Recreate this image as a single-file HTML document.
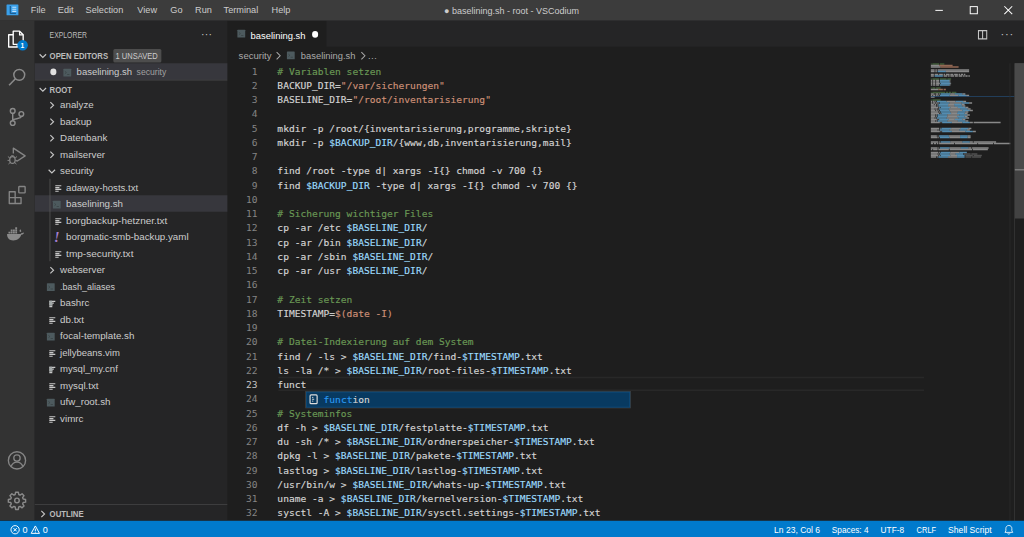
<!DOCTYPE html>
<html lang="de">
<head>
<meta charset="utf-8">
<title>baselining.sh - root - VSCodium</title>
<style>
html,body{margin:0;padding:0;width:1024px;height:537px;overflow:hidden;background:#1e1e1e}
#app{position:absolute;left:0;top:0;width:1368px;height:722px;transform-origin:0 0;transform:translate(-1.4px,-2px) scale(.75);font-family:"Liberation Sans",sans-serif;font-size:13px;color:#ccc;overflow:hidden}
#app div,#app span,#app svg,#app i{position:absolute;box-sizing:border-box;white-space:pre}
/* ---- title bar ---- */
#title{left:0;top:0;width:1368px;height:30px;background:#3c3c3c}
#title .m{top:1.3px;height:30px;line-height:30px;color:#ccc;font-size:13px;transform:scaleX(.94);transform-origin:0 0}
#wtitle{left:0;width:1368px;top:1.8px;height:30px;line-height:30px;text-align:center;font-size:12px;color:#ccc}
/* ---- activity bar ---- */
#act{left:0;top:30px;width:48px;height:666px;background:#333}
#act svg{left:9.500px;width:29px;height:29px;margin-top:-2px}
/* ---- side bar ---- */
#side{left:48px;top:30px;width:257px;height:666px;background:#252526}
#side .ttl{left:20px;top:1.7px;height:35px;line-height:35px;font-size:11px;color:#bbb;transform:scaleX(.83);transform-origin:0 0}
#side .hdr{left:0;width:257px;height:22px;line-height:22px;font-size:11px;font-weight:bold;color:#bbb}
#side .hdr .tx{left:20px;top:1px;transform:scaleX(.94);transform-origin:0 0}
#side .hdr svg.tw{left:3px;top:4px;width:16px;height:16px}
.row{left:0;width:257px;height:22px;line-height:22px;font-size:13px;color:#ccc}
.row.sel{background:#37373d}
.row svg.tw{position:relative!important;display:inline-block;vertical-align:top;width:16px;height:16px;top:4px;left:3px;margin-right:6px}
.row svg.fi{position:relative!important;display:inline-block;vertical-align:top;width:16px;height:16px;top:3px;margin-right:6px;overflow:visible}
.row .fy{position:relative!important;display:inline-block;width:16px;margin-right:6px;left:1.500px;top:.500px;text-align:center;color:#a57fd0;font-style:italic;font-weight:bold;font-family:"Liberation Serif",serif;font-size:19px;line-height:22px;vertical-align:top}
.row .lb{position:relative!important;top:1px}
/* ---- editor ---- */
#tabs{left:305px;top:30px;width:1063px;height:35px;background:#252526}
#tab{left:0;top:0;width:132px;height:35px;background:#1e1e1e;color:#fff;line-height:35px}
#bc{left:305px;top:65px;width:1063px;height:22px;line-height:22px;color:#a9a9a9;font-size:13px}
#ed{left:305px;top:0;width:1063px;height:696px}
.ln{left:0;width:40.300px;height:19px;line-height:21.400px;text-align:right;color:#858585;font-family:"DejaVu Sans Mono","Liberation Mono",monospace;font-size:12.79px}
.ln.cur{color:#c6c6c6}
.cl{left:66.700px;height:19px;line-height:21.400px;-webkit-text-stroke:.2px;color:#d4d4d4;font-family:"DejaVu Sans Mono","Liberation Mono",monospace;font-size:12.79px}
.cl span{position:static!important}
.c{color:#6a9955}.s{color:#ce9178}.v{color:#9cdcfe}.t{color:#d4d4d4}
#mm i{height:2px;opacity:.8}
/* ---- status ---- */
#status{left:0;top:697.300px;width:1368px;height:26px;background:#007acc;color:#fff;font-size:12px;line-height:22px}
#status span{top:.700px!important;transform-origin:0 0}
#status svg{margin-top:.300px;margin-left:1px}
</style>
</head>
<body>
<div id="app">

<!-- ================= EDITOR ================= -->
<div id="tabs">
  <div id="tab">
    <span style="left:8.500px;top:8px;width:16px;height:16px"><svg class="fi" viewBox="0 0 16 16"><rect x="4.400" y="4.400" width="10.400" height="10.400" rx="0.600" fill="#4d5a5e"/><path d="M6.400 7.800l2 1.600-2 1.600M9.400 12h3" stroke="#3a4447" stroke-width="1.100" fill="none"/></svg></span>
    <span style="left:31.300px;top:1.500px;transform:scaleX(.965);transform-origin:0 0">baselining.sh</span>
    <span style="left:112.500px;top:14.300px;width:8.500px;height:8.500px;border-radius:5px;background:#fff"></span>
  </div>
  <svg style="left:998.500px;top:10.500px;width:16px;height:16px" viewBox="0 0 16 16"><path d="M2.500 2.500h11v11h-11zM8 2.500v11" stroke="#c5c5c5" stroke-width="1.400" fill="none"/></svg>
  <span style="left:1031px;top:1.200px;line-height:33px;color:#c5c5c5;font-size:15px;letter-spacing:1px">···</span>
</div>
<div id="bc">
  <span style="left:14.500px;top:1.200px;transform:scaleX(.98);transform-origin:0 0">security</span>
  <svg style="left:59.600px;top:4px;width:16px;height:16px" viewBox="0 0 16 16"><path d="M5.7 3.3L10.4 8l-4.7 4.7" stroke="#a9a9a9" stroke-width="1.400" fill="none"/></svg>
  <span style="left:75px;top:2.300px;width:16px;height:16px"><svg class="fi" viewBox="0 0 16 16"><rect x="4.400" y="4.400" width="10.400" height="10.400" rx="0.600" fill="#4d5a5e"/><path d="M6.400 7.800l2 1.600-2 1.600M9.400 12h3" stroke="#3a4447" stroke-width="1.100" fill="none"/></svg></span>
  <span style="left:97.500px;top:1.200px;transform:scaleX(.96);transform-origin:0 0">baselining.sh</span>
  <svg style="left:173px;top:4px;width:16px;height:16px" viewBox="0 0 16 16"><path d="M5.7 3.3L10.4 8l-4.7 4.7" stroke="#a9a9a9" stroke-width="1.400" fill="none"/></svg>
  <span style="left:187px;top:1.200px">…</span>
</div>
<div id="ed">
  <!-- current line highlight -->
  <div style="left:67.5px;top:505px;width:861px;height:19px;border-top:2px solid #282828;border-bottom:2px solid #282828"></div>
<div class="ln" style="top:87px">1</div>
<div class="cl" style="top:87px"><span class="c"># Variablen setzen</span></div>
<div class="ln" style="top:106px">2</div>
<div class="cl" style="top:106px"><span class="t">BACKUP_DIR=</span><span class="s">"/var/sicherungen"</span></div>
<div class="ln" style="top:125px">3</div>
<div class="cl" style="top:125px"><span class="t">BASELINE_DIR=</span><span class="s">"/root/inventarisierung"</span></div>
<div class="ln" style="top:144px">4</div>
<div class="ln" style="top:163px">5</div>
<div class="cl" style="top:163px"><span class="t">mkdir -p /root/{inventarisierung,programme,skripte}</span></div>
<div class="ln" style="top:182px">6</div>
<div class="cl" style="top:182px"><span class="t">mkdir -p </span><span class="v">$BACKUP_DIR</span><span class="t">/{www,db,inventarisierung,mail}</span></div>
<div class="ln" style="top:201px">7</div>
<div class="ln" style="top:220px">8</div>
<div class="cl" style="top:220px"><span class="t">find /root -type d| xargs -I{} chmod -v 700 {}</span></div>
<div class="ln" style="top:239px">9</div>
<div class="cl" style="top:239px"><span class="t">find </span><span class="v">$BACKUP_DIR</span><span class="t"> -type d| xargs -I{} chmod -v 700 {}</span></div>
<div class="ln" style="top:258px">10</div>
<div class="ln" style="top:277px">11</div>
<div class="cl" style="top:277px"><span class="c"># Sicherung wichtiger Files</span></div>
<div class="ln" style="top:296px">12</div>
<div class="cl" style="top:296px"><span class="t">cp -ar /etc </span><span class="v">$BASELINE_DIR</span><span class="t">/</span></div>
<div class="ln" style="top:315px">13</div>
<div class="cl" style="top:315px"><span class="t">cp -ar /bin </span><span class="v">$BASELINE_DIR</span><span class="t">/</span></div>
<div class="ln" style="top:334px">14</div>
<div class="cl" style="top:334px"><span class="t">cp -ar /sbin </span><span class="v">$BASELINE_DIR</span><span class="t">/</span></div>
<div class="ln" style="top:353px">15</div>
<div class="cl" style="top:353px"><span class="t">cp -ar /usr </span><span class="v">$BASELINE_DIR</span><span class="t">/</span></div>
<div class="ln" style="top:372px">16</div>
<div class="ln" style="top:391px">17</div>
<div class="cl" style="top:391px"><span class="c"># Zeit setzen</span></div>
<div class="ln" style="top:410px">18</div>
<div class="cl" style="top:410px"><span class="t">TIMESTAMP=</span><span class="s">$(date -I)</span></div>
<div class="ln" style="top:429px">19</div>
<div class="ln" style="top:448px">20</div>
<div class="cl" style="top:448px"><span class="c"># Datei-Indexierung auf dem System</span></div>
<div class="ln" style="top:467px">21</div>
<div class="cl" style="top:467px"><span class="t">find / -ls &gt; </span><span class="v">$BASELINE_DIR</span><span class="t">/find-</span><span class="v">$TIMESTAMP</span><span class="t">.txt</span></div>
<div class="ln" style="top:486px">22</div>
<div class="cl" style="top:486px"><span class="t">ls -la /* &gt; </span><span class="v">$BASELINE_DIR</span><span class="t">/root-files-</span><span class="v">$TIMESTAMP</span><span class="t">.txt</span></div>
<div class="ln cur" style="top:505px">23</div>
<div class="cl" style="top:505px"><span class="t">funct</span></div>
<div class="ln" style="top:524px">24</div>
<div class="ln" style="top:543px">25</div>
<div class="cl" style="top:543px"><span class="c"># Systeminfos</span></div>
<div class="ln" style="top:562px">26</div>
<div class="cl" style="top:562px"><span class="t">df -h &gt; </span><span class="v">$BASELINE_DIR</span><span class="t">/festplatte-</span><span class="v">$TIMESTAMP</span><span class="t">.txt</span></div>
<div class="ln" style="top:581px">27</div>
<div class="cl" style="top:581px"><span class="t">du -sh /* &gt; </span><span class="v">$BASELINE_DIR</span><span class="t">/ordnerspeicher-</span><span class="v">$TIMESTAMP</span><span class="t">.txt</span></div>
<div class="ln" style="top:600px">28</div>
<div class="cl" style="top:600px"><span class="t">dpkg -l &gt; </span><span class="v">$BASELINE_DIR</span><span class="t">/pakete-</span><span class="v">$TIMESTAMP</span><span class="t">.txt</span></div>
<div class="ln" style="top:619px">29</div>
<div class="cl" style="top:619px"><span class="t">lastlog &gt; </span><span class="v">$BASELINE_DIR</span><span class="t">/lastlog-</span><span class="v">$TIMESTAMP</span><span class="t">.txt</span></div>
<div class="ln" style="top:638px">30</div>
<div class="cl" style="top:638px"><span class="t">/usr/bin/w &gt; </span><span class="v">$BASELINE_DIR</span><span class="t">/whats-up-</span><span class="v">$TIMESTAMP</span><span class="t">.txt</span></div>
<div class="ln" style="top:657px">31</div>
<div class="cl" style="top:657px"><span class="t">uname -a &gt; </span><span class="v">$BASELINE_DIR</span><span class="t">/kernelversion-</span><span class="v">$TIMESTAMP</span><span class="t">.txt</span></div>
<div class="ln" style="top:676px">32</div>
<div class="cl" style="top:676px"><span class="t">sysctl -A &gt; </span><span class="v">$BASELINE_DIR</span><span class="t">/sysctl.settings-</span><span class="v">$TIMESTAMP</span><span class="t">.txt</span></div>
  <!-- suggest widget -->
  <div id="sug" style="left:104.300px;top:524.300px;width:433.700px;height:22.500px;background:#252526;border:1px solid #454545">
    <div style="left:0;top:0;width:431.700px;height:20.500px;background:#083a61;border:1px solid #0f4d7e"></div>
    <svg style="left:2px;top:2px;width:16px;height:16px" viewBox="0 0 16 16"><rect x="3.300" y="2.200" width="9.400" height="11.600" rx="1.300" stroke="#dcdcdc" stroke-width="1.600" fill="none"/><path d="M6 5.500h1.600M6 8h2.800M6 10.500h1.600" stroke="#dcdcdc" stroke-width="1.300"/></svg>
    <span style="left:23px;top:0;height:19px;line-height:21px;-webkit-text-stroke:.2px;font-family:'DejaVu Sans Mono','Liberation Mono',monospace;font-size:12.79px;color:#d4d4d4"><span style="position:static!important;color:#2a98f0">funct</span>ion</span>
  </div>
  <!-- minimap -->
  <div id="mm" style="left:-305px;top:0;width:1368px;height:696px"><i style="left:1243px;top:87px;width:1px;background:#476a3d"></i><i style="left:1245px;top:87px;width:9px;background:#476a3d"></i><i style="left:1255px;top:87px;width:6px;background:#476a3d"></i><i style="left:1243px;top:89px;width:11px;background:#a4a4a4"></i><i style="left:1254px;top:89px;width:18px;background:#b07a62"></i><i style="left:1243px;top:91px;width:13px;background:#a4a4a4"></i><i style="left:1256px;top:91px;width:24px;background:#b07a62"></i><i style="left:1243px;top:95px;width:5px;background:#a4a4a4"></i><i style="left:1249px;top:95px;width:2px;background:#a4a4a4"></i><i style="left:1252px;top:95px;width:42px;background:#a4a4a4"></i><i style="left:1243px;top:97px;width:5px;background:#a4a4a4"></i><i style="left:1249px;top:97px;width:2px;background:#a4a4a4"></i><i style="left:1252px;top:97px;width:11px;background:#62a8d4"></i><i style="left:1263px;top:97px;width:31px;background:#a4a4a4"></i><i style="left:1243px;top:101px;width:4px;background:#a4a4a4"></i><i style="left:1248px;top:101px;width:5px;background:#a4a4a4"></i><i style="left:1254px;top:101px;width:5px;background:#a4a4a4"></i><i style="left:1260px;top:101px;width:2px;background:#a4a4a4"></i><i style="left:1263px;top:101px;width:5px;background:#a4a4a4"></i><i style="left:1269px;top:101px;width:4px;background:#a4a4a4"></i><i style="left:1274px;top:101px;width:5px;background:#a4a4a4"></i><i style="left:1280px;top:101px;width:2px;background:#a4a4a4"></i><i style="left:1283px;top:101px;width:3px;background:#a4a4a4"></i><i style="left:1287px;top:101px;width:2px;background:#a4a4a4"></i><i style="left:1243px;top:103px;width:4px;background:#a4a4a4"></i><i style="left:1248px;top:103px;width:11px;background:#62a8d4"></i><i style="left:1260px;top:103px;width:5px;background:#a4a4a4"></i><i style="left:1266px;top:103px;width:2px;background:#a4a4a4"></i><i style="left:1269px;top:103px;width:5px;background:#a4a4a4"></i><i style="left:1275px;top:103px;width:4px;background:#a4a4a4"></i><i style="left:1280px;top:103px;width:5px;background:#a4a4a4"></i><i style="left:1286px;top:103px;width:2px;background:#a4a4a4"></i><i style="left:1289px;top:103px;width:3px;background:#a4a4a4"></i><i style="left:1293px;top:103px;width:2px;background:#a4a4a4"></i><i style="left:1243px;top:107px;width:1px;background:#476a3d"></i><i style="left:1245px;top:107px;width:9px;background:#476a3d"></i><i style="left:1255px;top:107px;width:9px;background:#476a3d"></i><i style="left:1265px;top:107px;width:5px;background:#476a3d"></i><i style="left:1243px;top:109px;width:2px;background:#a4a4a4"></i><i style="left:1246px;top:109px;width:3px;background:#a4a4a4"></i><i style="left:1250px;top:109px;width:4px;background:#a4a4a4"></i><i style="left:1255px;top:109px;width:13px;background:#62a8d4"></i><i style="left:1268px;top:109px;width:1px;background:#a4a4a4"></i><i style="left:1243px;top:111px;width:2px;background:#a4a4a4"></i><i style="left:1246px;top:111px;width:3px;background:#a4a4a4"></i><i style="left:1250px;top:111px;width:4px;background:#a4a4a4"></i><i style="left:1255px;top:111px;width:13px;background:#62a8d4"></i><i style="left:1268px;top:111px;width:1px;background:#a4a4a4"></i><i style="left:1243px;top:113px;width:2px;background:#a4a4a4"></i><i style="left:1246px;top:113px;width:3px;background:#a4a4a4"></i><i style="left:1250px;top:113px;width:5px;background:#a4a4a4"></i><i style="left:1256px;top:113px;width:13px;background:#62a8d4"></i><i style="left:1269px;top:113px;width:1px;background:#a4a4a4"></i><i style="left:1243px;top:115px;width:2px;background:#a4a4a4"></i><i style="left:1246px;top:115px;width:3px;background:#a4a4a4"></i><i style="left:1250px;top:115px;width:4px;background:#a4a4a4"></i><i style="left:1255px;top:115px;width:13px;background:#62a8d4"></i><i style="left:1268px;top:115px;width:1px;background:#a4a4a4"></i><i style="left:1243px;top:119px;width:1px;background:#476a3d"></i><i style="left:1245px;top:119px;width:4px;background:#476a3d"></i><i style="left:1250px;top:119px;width:6px;background:#476a3d"></i><i style="left:1243px;top:121px;width:10px;background:#a4a4a4"></i><i style="left:1253px;top:121px;width:6px;background:#b07a62"></i><i style="left:1260px;top:121px;width:3px;background:#b07a62"></i><i style="left:1243px;top:125px;width:1px;background:#476a3d"></i><i style="left:1245px;top:125px;width:17px;background:#476a3d"></i><i style="left:1263px;top:125px;width:3px;background:#476a3d"></i><i style="left:1267px;top:125px;width:3px;background:#476a3d"></i><i style="left:1271px;top:125px;width:6px;background:#476a3d"></i><i style="left:1243px;top:127px;width:4px;background:#a4a4a4"></i><i style="left:1248px;top:127px;width:1px;background:#a4a4a4"></i><i style="left:1250px;top:127px;width:3px;background:#a4a4a4"></i><i style="left:1254px;top:127px;width:1px;background:#a4a4a4"></i><i style="left:1256px;top:127px;width:13px;background:#62a8d4"></i><i style="left:1269px;top:127px;width:6px;background:#a4a4a4"></i><i style="left:1275px;top:127px;width:10px;background:#62a8d4"></i><i style="left:1285px;top:127px;width:4px;background:#a4a4a4"></i><i style="left:1243px;top:129px;width:2px;background:#a4a4a4"></i><i style="left:1246px;top:129px;width:3px;background:#a4a4a4"></i><i style="left:1250px;top:129px;width:2px;background:#a4a4a4"></i><i style="left:1253px;top:129px;width:1px;background:#a4a4a4"></i><i style="left:1255px;top:129px;width:13px;background:#62a8d4"></i><i style="left:1268px;top:129px;width:12px;background:#a4a4a4"></i><i style="left:1280px;top:129px;width:10px;background:#62a8d4"></i><i style="left:1290px;top:129px;width:4px;background:#a4a4a4"></i><i style="left:1243px;top:131px;width:5px;background:#a4a4a4"></i><i style="left:1243px;top:135px;width:1px;background:#476a3d"></i><i style="left:1245px;top:135px;width:11px;background:#476a3d"></i><i style="left:1243px;top:137px;width:2px;background:#a4a4a4"></i><i style="left:1246px;top:137px;width:2px;background:#a4a4a4"></i><i style="left:1249px;top:137px;width:1px;background:#a4a4a4"></i><i style="left:1251px;top:137px;width:13px;background:#62a8d4"></i><i style="left:1264px;top:137px;width:12px;background:#a4a4a4"></i><i style="left:1276px;top:137px;width:10px;background:#62a8d4"></i><i style="left:1286px;top:137px;width:4px;background:#a4a4a4"></i><i style="left:1243px;top:139px;width:2px;background:#a4a4a4"></i><i style="left:1246px;top:139px;width:3px;background:#a4a4a4"></i><i style="left:1250px;top:139px;width:2px;background:#a4a4a4"></i><i style="left:1253px;top:139px;width:1px;background:#a4a4a4"></i><i style="left:1255px;top:139px;width:13px;background:#62a8d4"></i><i style="left:1268px;top:139px;width:16px;background:#a4a4a4"></i><i style="left:1284px;top:139px;width:10px;background:#62a8d4"></i><i style="left:1294px;top:139px;width:4px;background:#a4a4a4"></i><i style="left:1243px;top:141px;width:4px;background:#a4a4a4"></i><i style="left:1248px;top:141px;width:2px;background:#a4a4a4"></i><i style="left:1251px;top:141px;width:1px;background:#a4a4a4"></i><i style="left:1253px;top:141px;width:13px;background:#62a8d4"></i><i style="left:1266px;top:141px;width:8px;background:#a4a4a4"></i><i style="left:1274px;top:141px;width:10px;background:#62a8d4"></i><i style="left:1284px;top:141px;width:4px;background:#a4a4a4"></i><i style="left:1243px;top:143px;width:7px;background:#a4a4a4"></i><i style="left:1251px;top:143px;width:1px;background:#a4a4a4"></i><i style="left:1253px;top:143px;width:13px;background:#62a8d4"></i><i style="left:1266px;top:143px;width:9px;background:#a4a4a4"></i><i style="left:1275px;top:143px;width:10px;background:#62a8d4"></i><i style="left:1285px;top:143px;width:4px;background:#a4a4a4"></i><i style="left:1243px;top:145px;width:10px;background:#a4a4a4"></i><i style="left:1254px;top:145px;width:1px;background:#a4a4a4"></i><i style="left:1256px;top:145px;width:13px;background:#62a8d4"></i><i style="left:1269px;top:145px;width:10px;background:#a4a4a4"></i><i style="left:1279px;top:145px;width:10px;background:#62a8d4"></i><i style="left:1289px;top:145px;width:4px;background:#a4a4a4"></i><i style="left:1243px;top:147px;width:5px;background:#a4a4a4"></i><i style="left:1249px;top:147px;width:2px;background:#a4a4a4"></i><i style="left:1252px;top:147px;width:1px;background:#a4a4a4"></i><i style="left:1254px;top:147px;width:13px;background:#62a8d4"></i><i style="left:1267px;top:147px;width:15px;background:#a4a4a4"></i><i style="left:1282px;top:147px;width:10px;background:#62a8d4"></i><i style="left:1292px;top:147px;width:4px;background:#a4a4a4"></i><i style="left:1243px;top:149px;width:6px;background:#a4a4a4"></i><i style="left:1250px;top:149px;width:2px;background:#a4a4a4"></i><i style="left:1253px;top:149px;width:1px;background:#a4a4a4"></i><i style="left:1255px;top:149px;width:13px;background:#62a8d4"></i><i style="left:1268px;top:149px;width:17px;background:#a4a4a4"></i><i style="left:1285px;top:149px;width:10px;background:#62a8d4"></i><i style="left:1295px;top:149px;width:4px;background:#a4a4a4"></i><i style="left:1243px;top:151px;width:10px;background:#a4a4a4"></i><i style="left:1254px;top:151px;width:1px;background:#a4a4a4"></i><i style="left:1256px;top:151px;width:13px;background:#62a8d4"></i><i style="left:1269px;top:151px;width:10px;background:#a4a4a4"></i><i style="left:1279px;top:151px;width:10px;background:#62a8d4"></i><i style="left:1289px;top:151px;width:4px;background:#a4a4a4"></i><i style="left:1243px;top:153px;width:11px;background:#a4a4a4"></i><i style="left:1255px;top:153px;width:1px;background:#a4a4a4"></i><i style="left:1257px;top:153px;width:13px;background:#62a8d4"></i><i style="left:1270px;top:153px;width:8px;background:#a4a4a4"></i><i style="left:1278px;top:153px;width:10px;background:#62a8d4"></i><i style="left:1288px;top:153px;width:4px;background:#a4a4a4"></i><i style="left:1243px;top:155px;width:6px;background:#a4a4a4"></i><i style="left:1250px;top:155px;width:1px;background:#a4a4a4"></i><i style="left:1252px;top:155px;width:13px;background:#62a8d4"></i><i style="left:1265px;top:155px;width:16px;background:#a4a4a4"></i><i style="left:1281px;top:155px;width:10px;background:#62a8d4"></i><i style="left:1291px;top:155px;width:4px;background:#a4a4a4"></i><i style="left:1243px;top:157px;width:6px;background:#a4a4a4"></i><i style="left:1250px;top:157px;width:1px;background:#a4a4a4"></i><i style="left:1252px;top:157px;width:13px;background:#62a8d4"></i><i style="left:1265px;top:157px;width:13px;background:#a4a4a4"></i><i style="left:1278px;top:157px;width:10px;background:#62a8d4"></i><i style="left:1288px;top:157px;width:4px;background:#a4a4a4"></i><i style="left:1243px;top:159px;width:5px;background:#a4a4a4"></i><i style="left:1249px;top:159px;width:1px;background:#a4a4a4"></i><i style="left:1251px;top:159px;width:13px;background:#62a8d4"></i><i style="left:1264px;top:159px;width:16px;background:#a4a4a4"></i><i style="left:1280px;top:159px;width:10px;background:#62a8d4"></i><i style="left:1290px;top:159px;width:4px;background:#a4a4a4"></i><i style="left:1243px;top:161px;width:8px;background:#a4a4a4"></i><i style="left:1252px;top:161px;width:1px;background:#a4a4a4"></i><i style="left:1254px;top:161px;width:13px;background:#62a8d4"></i><i style="left:1267px;top:161px;width:8px;background:#a4a4a4"></i><i style="left:1275px;top:161px;width:10px;background:#62a8d4"></i><i style="left:1285px;top:161px;width:4px;background:#a4a4a4"></i><i style="left:1243px;top:163px;width:6px;background:#a4a4a4"></i><i style="left:1250px;top:163px;width:1px;background:#a4a4a4"></i><i style="left:1252px;top:163px;width:13px;background:#62a8d4"></i><i style="left:1265px;top:163px;width:14px;background:#a4a4a4"></i><i style="left:1279px;top:163px;width:10px;background:#62a8d4"></i><i style="left:1289px;top:163px;width:4px;background:#a4a4a4"></i><i style="left:1243px;top:165px;width:12px;background:#a4a4a4"></i><i style="left:1256px;top:165px;width:1px;background:#a4a4a4"></i><i style="left:1258px;top:165px;width:13px;background:#62a8d4"></i><i style="left:1271px;top:165px;width:14px;background:#a4a4a4"></i><i style="left:1285px;top:165px;width:10px;background:#62a8d4"></i><i style="left:1295px;top:165px;width:4px;background:#a4a4a4"></i><i style="left:1300px;top:165px;width:36px;background:#a4a4a4"></i><i style="left:1243px;top:173px;width:11px;background:#a4a4a4"></i><i style="left:1255px;top:173px;width:1px;background:#a4a4a4"></i><i style="left:1257px;top:173px;width:13px;background:#62a8d4"></i><i style="left:1270px;top:173px;width:13px;background:#a4a4a4"></i><i style="left:1283px;top:173px;width:10px;background:#62a8d4"></i><i style="left:1293px;top:173px;width:4px;background:#a4a4a4"></i><i style="left:1243px;top:175px;width:9px;background:#a4a4a4"></i><i style="left:1253px;top:175px;width:1px;background:#a4a4a4"></i><i style="left:1255px;top:175px;width:13px;background:#62a8d4"></i><i style="left:1268px;top:175px;width:13px;background:#a4a4a4"></i><i style="left:1281px;top:175px;width:10px;background:#62a8d4"></i><i style="left:1291px;top:175px;width:4px;background:#a4a4a4"></i><i style="left:1243px;top:177px;width:12px;background:#a4a4a4"></i><i style="left:1256px;top:177px;width:1px;background:#a4a4a4"></i><i style="left:1258px;top:177px;width:13px;background:#62a8d4"></i><i style="left:1271px;top:177px;width:18px;background:#a4a4a4"></i><i style="left:1289px;top:177px;width:10px;background:#62a8d4"></i><i style="left:1299px;top:177px;width:4px;background:#a4a4a4"></i><i style="left:1243px;top:183px;width:8px;background:#a4a4a4"></i><i style="left:1252px;top:183px;width:1px;background:#a4a4a4"></i><i style="left:1254px;top:183px;width:13px;background:#62a8d4"></i><i style="left:1267px;top:183px;width:15px;background:#a4a4a4"></i><i style="left:1282px;top:183px;width:10px;background:#62a8d4"></i><i style="left:1292px;top:183px;width:4px;background:#a4a4a4"></i><i style="left:1243px;top:185px;width:9px;background:#a4a4a4"></i><i style="left:1253px;top:185px;width:1px;background:#a4a4a4"></i><i style="left:1255px;top:185px;width:13px;background:#62a8d4"></i><i style="left:1268px;top:185px;width:14px;background:#a4a4a4"></i><i style="left:1282px;top:185px;width:10px;background:#62a8d4"></i><i style="left:1292px;top:185px;width:4px;background:#a4a4a4"></i><i style="left:1243px;top:191px;width:10px;background:#a4a4a4"></i><i style="left:1254px;top:191px;width:1px;background:#a4a4a4"></i><i style="left:1256px;top:191px;width:13px;background:#62a8d4"></i><i style="left:1269px;top:191px;width:16px;background:#a4a4a4"></i><i style="left:1285px;top:191px;width:10px;background:#62a8d4"></i><i style="left:1295px;top:191px;width:4px;background:#a4a4a4"></i><i style="left:1300px;top:191px;width:30px;background:#a4a4a4"></i><i style="left:1243px;top:193px;width:3px;background:#a4a4a4"></i><i style="left:1247px;top:193px;width:3px;background:#a4a4a4"></i><i style="left:1251px;top:193px;width:2px;background:#a4a4a4"></i><i style="left:1254px;top:193px;width:20px;background:#a4a4a4"></i><i style="left:1275px;top:193px;width:30px;background:#a4a4a4"></i><i style="left:1306px;top:193px;width:20px;background:#a4a4a4"></i><i style="left:1327px;top:193px;width:22px;background:#a4a4a4"></i><i style="left:1243px;top:199px;width:9px;background:#a4a4a4"></i><i style="left:1253px;top:199px;width:1px;background:#a4a4a4"></i><i style="left:1255px;top:199px;width:13px;background:#62a8d4"></i><i style="left:1268px;top:199px;width:15px;background:#a4a4a4"></i><i style="left:1283px;top:199px;width:10px;background:#62a8d4"></i><i style="left:1293px;top:199px;width:4px;background:#a4a4a4"></i><i style="left:1298px;top:199px;width:22px;background:#a4a4a4"></i><i style="left:1243px;top:201px;width:2px;background:#a4a4a4"></i><i style="left:1246px;top:201px;width:6px;background:#a4a4a4"></i><i style="left:1253px;top:201px;width:14px;background:#a4a4a4"></i><i style="left:1268px;top:201px;width:30px;background:#a4a4a4"></i><i style="left:1299px;top:201px;width:20px;background:#a4a4a4"></i><i style="left:1243px;top:205px;width:10px;background:#a4a4a4"></i><i style="left:1254px;top:205px;width:1px;background:#a4a4a4"></i><i style="left:1256px;top:205px;width:13px;background:#62a8d4"></i><i style="left:1269px;top:205px;width:12px;background:#a4a4a4"></i><i style="left:1281px;top:205px;width:10px;background:#62a8d4"></i><i style="left:1243px;top:207px;width:9px;background:#a4a4a4"></i><i style="left:1253px;top:207px;width:1px;background:#a4a4a4"></i><i style="left:1255px;top:207px;width:13px;background:#62a8d4"></i><i style="left:1268px;top:207px;width:8px;background:#a4a4a4"></i><i style="left:1276px;top:207px;width:10px;background:#62a8d4"></i><i style="left:1287px;top:207px;width:9px;background:#5c5c5c"></i><i style="left:1297px;top:207px;width:8px;background:#5c5c5c"></i><i style="left:1243px;top:209px;width:10px;background:#a4a4a4"></i><i style="left:1254px;top:209px;width:1px;background:#a4a4a4"></i><i style="left:1256px;top:209px;width:13px;background:#62a8d4"></i><i style="left:1269px;top:209px;width:9px;background:#a4a4a4"></i><i style="left:1278px;top:209px;width:10px;background:#62a8d4"></i><i style="left:1289px;top:209px;width:10px;background:#5c5c5c"></i><i style="left:1300px;top:209px;width:11px;background:#5c5c5c"></i><i style="left:1243px;top:211px;width:7px;background:#a4a4a4"></i><i style="left:1251px;top:211px;width:1px;background:#a4a4a4"></i><i style="left:1253px;top:211px;width:13px;background:#62a8d4"></i><i style="left:1266px;top:211px;width:12px;background:#a4a4a4"></i><i style="left:1278px;top:211px;width:10px;background:#62a8d4"></i><i style="left:1289px;top:211px;width:8px;background:#5c5c5c"></i><i style="left:1298px;top:211px;width:12px;background:#5c5c5c"></i>
    <div style="left:1243px;top:131px;width:112px;height:1.4px;background:#264f78;opacity:.9"></div>
  </div>
  <!-- overview ruler + scrollbar -->
  <div style="left:1042.5px;top:87px;width:1px;height:611px;background:#2b2b2b"></div>
  <div style="left:1049px;top:87px;width:1px;height:611px;background:#383838"></div>
  <div style="left:1049.5px;top:87px;width:14px;height:207px;background:#424242"></div>
  <div style="left:1049.5px;top:87px;width:14px;height:142px;background:#4a4a4a"></div>
  <div style="left:1049.5px;top:228px;width:14px;height:2px;background:#7a7a7a"></div>
</div>

<!-- ================= SIDE BAR ================= -->
<div id="side">
  <span class="ttl">EXPLORER</span>
  <span style="left:222px;top:1.500px;line-height:33px;color:#c5c5c5;font-size:14px;letter-spacing:.3px">···</span>
  <div class="hdr" style="top:35px"><svg class="tw" viewBox="0 0 16 16"><path d="M3.700 6L8 10.300l4.300-4.300" stroke="#c5c5c5" stroke-width="1.500" fill="none"/></svg><span class="tx">OPEN EDITORS</span>
    <span style="left:104.500px;top:3px;width:64px;height:18px;background:#4d4d4d;border-radius:2px"></span><span style="left:108px;top:1px;color:#ccc;font-weight:normal;font-size:11px;transform:scaleX(.91);transform-origin:0 0">1 UNSAVED</span>
  </div>
  <div class="row sel" style="top:57px">
    <span style="left:20.800px;top:7px;width:8.500px;height:8.500px;border-radius:5px;background:#e0e0e0"></span>
    <span style="left:33.500px;top:-.500px;width:16px;height:16px"><svg class="fi" viewBox="0 0 16 16"><rect x="4.400" y="4.400" width="10.400" height="10.400" rx="0.600" fill="#4d5a5e"/><path d="M6.400 7.800l2 1.600-2 1.600M9.400 12h3" stroke="#3a4447" stroke-width="1.100" fill="none"/></svg></span>
    <span style="left:56px;top:1px;transform:scaleX(.975);transform-origin:0 0">baselining.sh</span>
    <span style="left:136px;top:1px;font-size:11.5px;color:#a0a0a0">security</span>
  </div>
  <div class="hdr" style="top:79px;border-top:1px solid rgba(204,204,204,.2)"><svg class="tw" viewBox="0 0 16 16"><path d="M3.700 6L8 10.300l4.300-4.300" stroke="#c5c5c5" stroke-width="1.500" fill="none"/></svg><span class="tx">ROOT</span></div>
  <div id="tree" style="left:0;top:-30px;width:257px;height:600px">
<div class="row" style="top:131px;padding-left:12px"><svg class="tw" viewBox="0 0 16 16"><path d="M6 3.700L10.300 8l-4.300 4.300" stroke="#c5c5c5" stroke-width="1.500" fill="none"/></svg><span class="lb">analyze</span></div>
<div class="row" style="top:153px;padding-left:12px"><svg class="tw" viewBox="0 0 16 16"><path d="M6 3.700L10.300 8l-4.300 4.300" stroke="#c5c5c5" stroke-width="1.500" fill="none"/></svg><span class="lb">backup</span></div>
<div class="row" style="top:175px;padding-left:12px"><svg class="tw" viewBox="0 0 16 16"><path d="M6 3.700L10.300 8l-4.300 4.300" stroke="#c5c5c5" stroke-width="1.500" fill="none"/></svg><span class="lb">Datenbank</span></div>
<div class="row" style="top:197px;padding-left:12px"><svg class="tw" viewBox="0 0 16 16"><path d="M6 3.700L10.300 8l-4.300 4.300" stroke="#c5c5c5" stroke-width="1.500" fill="none"/></svg><span class="lb">mailserver</span></div>
<div class="row" style="top:219px;padding-left:12px"><svg class="tw" viewBox="0 0 16 16"><path d="M3.700 6L8 10.300l4.300-4.300" stroke="#c5c5c5" stroke-width="1.500" fill="none"/></svg><span class="lb">security</span></div>
<div class="row" style="top:241px;padding-left:20px"><svg class="fi" viewBox="0 0 16 16"><path d="M7.600 6.400h8M7.600 8.800h5.500M7.600 11.200h8M7.600 13.600h4.500" stroke="#c8c8c8" stroke-width="1.500" fill="none"/></svg><span class="lb" style="display:inline-block;transform:scaleX(.985);transform-origin:0 0">adaway-hosts.txt</span></div>
<div class="row sel" style="top:263px;padding-left:20px"><svg class="fi" viewBox="0 0 16 16"><rect x="4.400" y="4.400" width="10.400" height="10.400" rx="0.600" fill="#4d5a5e"/><path d="M6.400 7.800l2 1.600-2 1.600M9.400 12h3" stroke="#3a4447" stroke-width="1.100" fill="none"/></svg><span class="lb">baselining.sh</span></div>
<div class="row" style="top:285px;padding-left:20px"><svg class="fi" viewBox="0 0 16 16"><path d="M7.600 6.400h8M7.600 8.800h5.500M7.600 11.200h8M7.600 13.600h4.500" stroke="#c8c8c8" stroke-width="1.500" fill="none"/></svg><span class="lb" style="display:inline-block;transform:scaleX(1.02);transform-origin:0 0">borgbackup-hetzner.txt</span></div>
<div class="row" style="top:307px;padding-left:20px"><span class="fy">!</span><span class="lb">borgmatic-smb-backup.yaml</span></div>
<div class="row" style="top:329px;padding-left:20px"><svg class="fi" viewBox="0 0 16 16"><path d="M7.600 6.400h8M7.600 8.800h5.500M7.600 11.200h8M7.600 13.600h4.500" stroke="#c8c8c8" stroke-width="1.500" fill="none"/></svg><span class="lb" style="display:inline-block;transform:scaleX(1.03);transform-origin:0 0">tmp-security.txt</span></div>
<div class="row" style="top:351px;padding-left:12px"><svg class="tw" viewBox="0 0 16 16"><path d="M6 3.700L10.300 8l-4.300 4.300" stroke="#c5c5c5" stroke-width="1.500" fill="none"/></svg><span class="lb">webserver</span></div>
<div class="row" style="top:373px;padding-left:12px"><svg class="fi" viewBox="0 0 16 16"><rect x="4.400" y="4.400" width="10.400" height="10.400" rx="0.600" fill="#4d5a5e"/><path d="M6.400 7.800l2 1.600-2 1.600M9.400 12h3" stroke="#3a4447" stroke-width="1.100" fill="none"/></svg><span class="lb" style="display:inline-block;transform:scaleX(.92);transform-origin:0 0">.bash_aliases</span></div>
<div class="row" style="top:395px;padding-left:12px"><svg class="fi" viewBox="0 0 16 16"><path d="M7.600 6.400h8M7.600 8.800h6M7.600 11.200h4.500M7.600 13.600h4" stroke="#c8c8c8" stroke-width="1.600" fill="none"/><rect x="7.600" y="5.600" width="3.600" height="6.400" fill="#a4aaaa"/></svg><span class="lb">bashrc</span></div>
<div class="row" style="top:417px;padding-left:12px"><svg class="fi" viewBox="0 0 16 16"><path d="M7.600 6.400h8M7.600 8.800h5.500M7.600 11.200h8M7.600 13.600h4.500" stroke="#c8c8c8" stroke-width="1.500" fill="none"/></svg><span class="lb">db.txt</span></div>
<div class="row" style="top:439px;padding-left:12px"><svg class="fi" viewBox="0 0 16 16"><rect x="4.400" y="4.400" width="10.400" height="10.400" rx="0.600" fill="#4d5a5e"/><path d="M6.400 7.800l2 1.600-2 1.600M9.400 12h3" stroke="#3a4447" stroke-width="1.100" fill="none"/></svg><span class="lb">focal-template.sh</span></div>
<div class="row" style="top:461px;padding-left:12px"><svg class="fi" viewBox="0 0 16 16"><path d="M7.600 6.400h8M7.600 8.800h5.500M7.600 11.200h8M7.600 13.600h4.500" stroke="#c8c8c8" stroke-width="1.500" fill="none"/></svg><span class="lb" style="display:inline-block;transform:scaleX(.975);transform-origin:0 0">jellybeans.vim</span></div>
<div class="row" style="top:483px;padding-left:12px"><svg class="fi" viewBox="0 0 16 16"><path d="M7.600 6.400h8M7.600 8.800h6M7.600 11.200h4.500M7.600 13.600h4" stroke="#c8c8c8" stroke-width="1.600" fill="none"/><rect x="7.600" y="5.600" width="3.600" height="6.400" fill="#a4aaaa"/></svg><span class="lb" style="display:inline-block;transform:scaleX(.98);transform-origin:0 0">mysql_my.cnf</span></div>
<div class="row" style="top:505px;padding-left:12px"><svg class="fi" viewBox="0 0 16 16"><path d="M7.600 6.400h8M7.600 8.800h5.500M7.600 11.200h8M7.600 13.600h4.500" stroke="#c8c8c8" stroke-width="1.500" fill="none"/></svg><span class="lb">mysql.txt</span></div>
<div class="row" style="top:527px;padding-left:12px"><svg class="fi" viewBox="0 0 16 16"><rect x="4.400" y="4.400" width="10.400" height="10.400" rx="0.600" fill="#4d5a5e"/><path d="M6.400 7.800l2 1.600-2 1.600M9.400 12h3" stroke="#3a4447" stroke-width="1.100" fill="none"/></svg><span class="lb">ufw_root.sh</span></div>
<div class="row" style="top:549px;padding-left:12px"><svg class="fi" viewBox="0 0 16 16"><path d="M7.600 6.400h8M7.600 8.800h5.500M7.600 11.200h8M7.600 13.600h4.500" stroke="#c8c8c8" stroke-width="1.500" fill="none"/></svg><span class="lb">vimrc</span></div>
    <div style="left:20px;top:241px;width:1px;height:110px;background:#585858"></div>
  </div>
  <div class="hdr" style="top:645.300px;border-top:1px solid rgba(204,204,204,.2)"><svg class="tw" viewBox="0 0 16 16"><path d="M6 3.700L10.300 8l-4.300 4.300" stroke="#c5c5c5" stroke-width="1.500" fill="none"/></svg><span class="tx">OUTLINE</span></div>
</div>

<!-- ================= ACTIVITY BAR ================= -->
<div id="act">
  <!-- explorer (active) -->
  <svg style="top:12px;margin-left:-1.700px" viewBox="0 0 24 24"><path d="M9.5 3.5h7l4 4v10.5h-11z" stroke="#fff" stroke-width="1.5" fill="none" stroke-linejoin="round"/><path d="M16.5 3.5v4h4" stroke="#fff" stroke-width="1.3" fill="none"/><path d="M9.5 7.5h-5v13.5h9.5v-3" stroke="#fff" stroke-width="1.5" fill="none" stroke-linejoin="round"/></svg>
  <div style="left:24.600px;top:26px;width:14px;height:14px;border-radius:7px;background:#007acc;color:#fff;font-size:9px;font-weight:bold;line-height:14px;text-align:center">1</div>
  <!-- search -->
  <svg style="top:63.300px" viewBox="0 0 24 24"><circle cx="14.500" cy="9.500" r="6" stroke="#8a8a8a" stroke-width="1.650" fill="none"/><path d="M10.300 13.800L3.300 21" stroke="#8a8a8a" stroke-width="1.750"/></svg>
  <!-- scm -->
  <svg style="top:116px" viewBox="0 0 24 24"><circle cx="7.300" cy="5.400" r="2.600" stroke="#8a8a8a" stroke-width="1.600" fill="none"/><circle cx="7.300" cy="18.800" r="2.600" stroke="#8a8a8a" stroke-width="1.600" fill="none"/><circle cx="16.800" cy="8.800" r="2.600" stroke="#8a8a8a" stroke-width="1.600" fill="none"/><path d="M7.300 8v8.200M16.800 11.400c0 3.600-9.500 1.600-9.500 4.800" stroke="#8a8a8a" stroke-width="1.600" fill="none"/></svg>
  <!-- debug -->
  <svg style="top:168px" viewBox="0 0 24 24"><path d="M8 9.5V3.5l13 8.5-9.5 6.2" stroke="#858585" stroke-width="1.5" fill="none" stroke-linejoin="round"/><ellipse cx="7" cy="16.5" rx="3" ry="3.8" stroke="#858585" stroke-width="1.4" fill="none"/><path d="M4 14.2L2 12.8M10 14.2l2-1.4M3.8 17H1.6M10.2 17h2.2M4.4 19.4l-1.8 1.6M9.6 19.4l1.8 1.6M5 12.8c.4-1.6 3.6-1.6 4 0" stroke="#858585" stroke-width="1.1" fill="none"/></svg>
  <!-- extensions -->
  <svg style="top:220px" viewBox="0 0 24 24"><path d="M3.5 8.5h6.5v6.5h6.5v6.5h-13zM3.500 15h6.5v6.5M10 15v0" stroke="#858585" stroke-width="1.5" fill="none" stroke-linejoin="round"/><rect x="14" y="2.8" width="7" height="7" rx="0.8" stroke="#858585" stroke-width="1.5" fill="none"/></svg>
  <!-- docker -->
  <svg style="top:272.700px;left:10.300px;width:25px;height:25px;margin-top:0" viewBox="0 0 24 24"><path fill="#8a8a8a" d="M1.2 11.2h16.6c.5-.1 1.500-.5 1.900-1.400.6.100 1.800.200 2.900-.500.400.500.300.800-.200 1.500-.700.900-1.900 1.300-3 1.300-1.400 4-4.600 7.300-10.300 7.300-5 0-7.900-3-7.900-8.200zM3 8.300h2.400v2.400H3zM5.900 8.300h2.400v2.400H5.900zM8.800 8.300h2.400v2.400H8.800zM11.700 8.300h2.400v2.400h-2.400zM5.900 5.500h2.400v2.400H5.900zM8.800 5.500h2.400v2.400H8.800zM11.700 5.500h2.400v2.400h-2.400zM11.700 2.700h2.400v2.400h-2.400zM17.700 8.500c-.6-.8-.6-2.300.3-3.300 1 .7 1.500 1.900 1.300 3z"/></svg>
  <!-- account -->
  <svg style="top:574px" viewBox="0 0 24 24"><circle cx="12" cy="12" r="9.500" stroke="#858585" stroke-width="1.5" fill="none"/><circle cx="12" cy="9.500" r="3.500" stroke="#858585" stroke-width="1.5" fill="none"/><path d="M5.500 18.800c1.200-3.200 3.600-4.800 6.500-4.800s5.300 1.600 6.500 4.800" stroke="#858585" stroke-width="1.5" fill="none"/></svg>
  <!-- settings -->
  <svg style="top:627px" viewBox="0 0 24 24"><circle cx="12" cy="12.300" r="2.500" stroke="#8a8a8a" stroke-width="1.600" fill="none"/><path d="M10.300 2.500h3.400l.5 2.900 1.700.8 2.500-1.700 2.400 2.400-1.700 2.500.7 1.700 3 .5v3.400l-3 .5-.7 1.700 1.700 2.500-2.400 2.400-2.500-1.700-1.700.7-.5 3h-3.400l-.5-3-1.700-.7-2.500 1.700-2.400-2.400 1.700-2.500-.7-1.700-3-.5v-3.400l3-.5.700-1.700-1.700-2.500 2.400-2.400 2.500 1.700 1.700-.8z" stroke="#8a8a8a" stroke-width="1.800" fill="none" stroke-linejoin="round" transform="translate(12 12.300) scale(.88) translate(-12 -12.800)"/></svg>
</div>

<!-- ================= STATUS BAR ================= -->
<div id="status">
  <svg style="left:14px;top:4px;width:14px;height:14px" viewBox="0 0 16 16"><circle cx="8" cy="8" r="6.300" stroke="#fff" stroke-width="1.500" fill="none"/><path d="M5.500 5.500l5 5M10.500 5.500l-5 5" stroke="#fff" stroke-width="1.500"/></svg>
  <span style="left:32px;top:0">0</span>
  <svg style="left:41px;top:4px;width:14px;height:14px" viewBox="0 0 16 16"><path d="M8 2.200L14.300 13.500H1.700z" stroke="#fff" stroke-width="1.500" fill="none" stroke-linejoin="round"/><path d="M8 6.300v4M8 11.200v1.200" stroke="#fff" stroke-width="1.400"/></svg>
  <span style="left:59px;top:0">0</span>
  <span style="left:1034px;top:0;transform:scaleX(.947)">Ln 23, Col 6</span>
  <span style="left:1111.200px;top:0;transform:scaleX(.916)">Spaces: 4</span>
  <span style="left:1176.200px;top:0;transform:scaleX(.92)">UTF-8</span>
  <span style="left:1223.600px;top:0;transform:scaleX(.83)">CRLF</span>
  <span style="left:1266px;top:0;transform:scaleX(.955)">Shell Script</span>
  <svg style="left:1338px;top:3px;width:16px;height:16px" viewBox="0 0 16 16"><path d="M8 2.300c-2.500 0-4 1.800-4 4v3.200l-1.200 2h10.400l-1.200-2V6.300c0-2.200-1.500-4-4-4zM6.600 12.800c.2.800.7 1.200 1.400 1.200s1.200-.4 1.400-1.200" stroke="#fff" stroke-width="1.100" fill="none" stroke-linejoin="round"/></svg>
</div>

<!-- ================= TITLE BAR ================= -->
<div id="title">
  <svg style="left:9.500px;top:7.500px;width:17px;height:16px" viewBox="0 0 17 16"><rect x="0.500" y="0.500" width="16" height="14.500" rx="0.800" fill="#3aa0ea"/><path d="M5.600 2.500v10.500M5.600 12.600h7.500" stroke="#1c5f96" stroke-width="1.700" fill="none"/><path d="M8.200 4.200h5.400M8.200 7h5.400M8.200 9.800h5.400" stroke="#bfe2ff" stroke-width="1.400" fill="none"/></svg>
  <div id="wtitle">● baselining.sh - root - VSCodium</div>
  <span class="m" style="left:43px">File</span>
  <span class="m" style="left:78.700px">Edit</span>
  <span class="m" style="left:115.800px">Selection</span>
  <span class="m" style="left:185px">View</span>
  <span class="m" style="left:228.500px">Go</span>
  <span class="m" style="left:261.500px">Run</span>
  <span class="m" style="left:300px">Terminal</span>
  <span class="m" style="left:363.500px">Help</span>
  <svg style="left:1231px;top:1px;width:46px;height:30px" viewBox="0 0 46 30"><path d="M18 15.500h10" stroke="#fff" stroke-width="1.3"/></svg>
  <svg style="left:1277px;top:1px;width:46px;height:30px" viewBox="0 0 46 30"><rect x="18.500" y="10.500" width="9.500" height="9.500" stroke="#fff" stroke-width="1.3" fill="none"/></svg>
  <svg style="left:1323px;top:1px;width:46px;height:30px" viewBox="0 0 46 30"><path d="M18 10l10.500 10.500M28.500 10l-10.500 10.500" stroke="#fff" stroke-width="1.400"/></svg>
</div>

</div>
</body>
</html>
